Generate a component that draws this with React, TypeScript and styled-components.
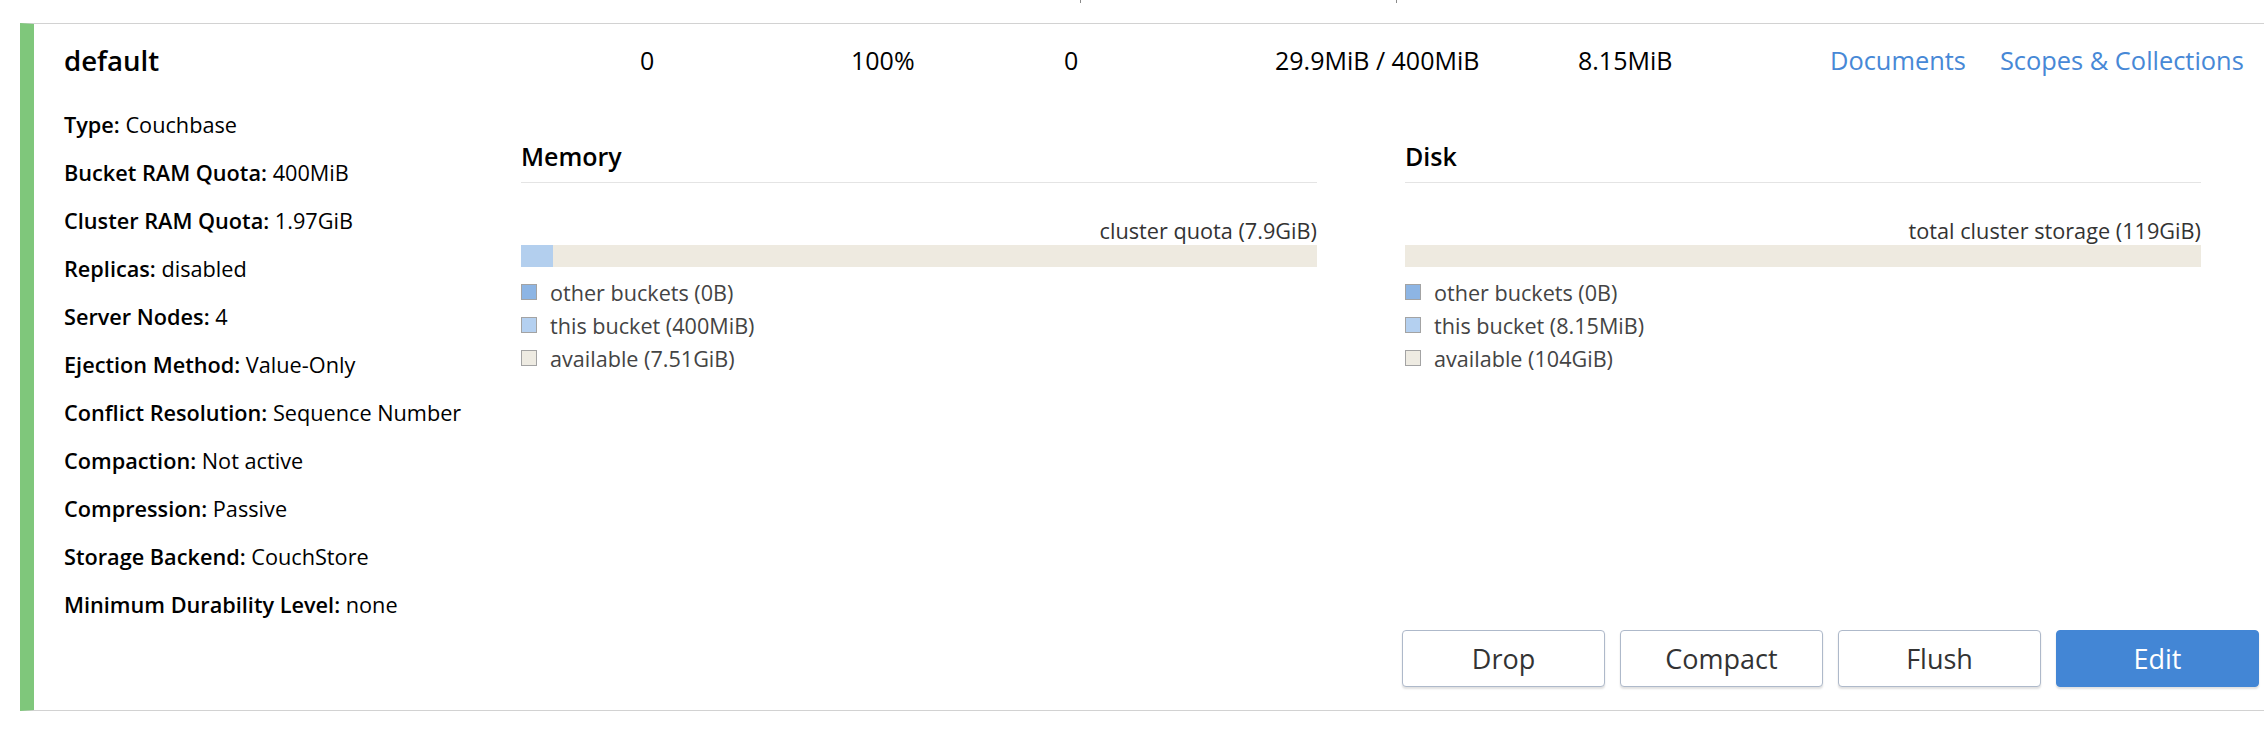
import styled, { createGlobalStyle } from "styled-components";

const GlobalStyle = createGlobalStyle`
    html, body {
        margin: 0;
        padding: 0;
        background: #fff;
    }
    body {
        font-family: "Open Sans", "Noto Sans", "Liberation Sans", sans-serif;
        color: #000;
    }
`;

const Page = styled.div`
    width: 2264px;
    height: 729px;
    overflow: hidden;
`;
const PrevRowTail = styled.div`
    height: 23px;
    display: flex;
    align-items: flex-start;
    padding-left: 1080px;
    gap: 315px;
`;
const Tick = styled.span`
    width: 1px;
    height: 3px;
    background: #8a8a8a;
`;
const Card = styled.div`
    margin-left: 20px;
    border-top: 1px solid #d2d2d2;
    border-bottom: 1px solid #d2d2d2;
    border-left: 14px solid #7fc77b;
    padding: 15.5px 5px 23px 30px;
`;
const Header = styled.div`
    display: grid;
    grid-template-columns: 576px 211px 213px 211px 303px 252px auto;
    align-items: center;
    height: 40px;
    font-size: 25px;
    line-height: 40px;
`;
const BucketName = styled.div`
    font-size: 27.6px;
    font-weight: 600;
`;
const Links = styled.div`
    display: flex;
    gap: 34px;
    font-size: 25.4px;
`;
const Link = styled.a`
    color: #4788d6;
    text-decoration: none;
    cursor: pointer;
`;
const Body = styled.div`
    margin-top: 21.1px;
    display: grid;
    grid-template-columns: 457px 1fr;
    min-height: 586px;
`;
const Details = styled.div`
    display: flex;
    flex-direction: column;
    font-size: 21.7px;
    line-height: 48px;
`;
const Label = styled.b`
    font-weight: 600;
`;
const RightSide = styled.div`
    display: flex;
    flex-direction: column;
`;
const Charts = styled.div`
    display: grid;
    grid-template-columns: 796px 796px;
    gap: 88px;
    padding-top: 38.5px;
`;
const Title = styled.div`
    font-size: 25px;
    font-weight: 600;
    line-height: 34px;
    padding-bottom: 8.7px;
    border-bottom: 1px solid #e4e4e4;
`;
const Total = styled.div`
    margin-top: 36.6px;
    text-align: right;
    font-size: 21.7px;
    line-height: 24px;
    color: #333;
`;
const Bar = styled.div`
    margin-top: 2px;
    height: 22px;
    background: #eeeae0;
    display: flex;
`;
const BarFill = styled.div`
    height: 100%;
    background: #b3cfee;
`;
const Legend = styled.div`
    margin-top: 8.5px;
    display: flex;
    flex-direction: column;
`;
const LegendRow = styled.div`
    display: flex;
    align-items: center;
    gap: 13px;
    font-size: 21.6px;
    line-height: 33px;
    color: #444;
`;
const Swatch = styled.span<{ $color: string }>`
    width: 14px;
    height: 14px;
    background: ${(p) => p.$color};
    border: 1px solid #a3a3a3;
`;
const Buttons = styled.div`
    margin-top: auto;
    display: flex;
    justify-content: flex-end;
    gap: 15px;
`;
const Button = styled.button<{ $primary?: boolean }>`
    width: 203px;
    height: 57px;
    font-family: inherit;
    font-size: 27px;
    border-radius: 4px;
    cursor: pointer;
    color: ${(p) => (p.$primary ? "#fff" : "#333")};
    background: ${(p) => (p.$primary ? "#4386d5" : "#fff")};
    border: 1px solid ${(p) => (p.$primary ? "#4386d5" : "#aeb9ca")};
    box-shadow: 0 2px 2px rgba(0, 0, 0, 0.12);
`;

const details: [string, string][] = [
    ["Type", "Couchbase"],
    ["Bucket RAM Quota", "400MiB"],
    ["Cluster RAM Quota", "1.97GiB"],
    ["Replicas", "disabled"],
    ["Server Nodes", "4"],
    ["Ejection Method", "Value-Only"],
    ["Conflict Resolution", "Sequence Number"],
    ["Compaction", "Not active"],
    ["Compression", "Passive"],
    ["Storage Backend", "CouchStore"],
    ["Minimum Durability Level", "none"],
];

interface IUsage {
    title: string;
    total: string;
    used: number;
    legend: [string, string][];
}
const usage: IUsage[] = [
    {
        title: "Memory",
        total: "cluster quota (7.9GiB)",
        used: 0.04,
        legend: [
            ["#8db5e4", "other buckets (0B)"],
            ["#b4d0f0", "this bucket (400MiB)"],
            ["#eeebe2", "available (7.51GiB)"],
        ],
    },
    {
        title: "Disk",
        total: "total cluster storage (119GiB)",
        used: 0,
        legend: [
            ["#8db5e4", "other buckets (0B)"],
            ["#b4d0f0", "this bucket (8.15MiB)"],
            ["#eeebe2", "available (104GiB)"],
        ],
    },
];

export default function App() {
    return (
        <Page>
            <GlobalStyle />
            <PrevRowTail>
                <Tick />
                <Tick />
            </PrevRowTail>
            <Card>
                <Header>
                    <BucketName>default</BucketName>
                    <div>0</div>
                    <div>100%</div>
                    <div>0</div>
                    <div>29.9MiB / 400MiB</div>
                    <div>8.15MiB</div>
                    <Links>
                        <Link>Documents</Link>
                        <Link>Scopes &amp; Collections</Link>
                    </Links>
                </Header>
                <Body>
                    <Details>
                        {details.map(([k, v]) => (
                            <div key={k}>
                                <Label>{k}:</Label> {v}
                            </div>
                        ))}
                    </Details>
                    <RightSide>
                        <Charts>
                            {usage.map((u) => (
                                <div key={u.title}>
                                    <Title>{u.title}</Title>
                                    <Total>{u.total}</Total>
                                    <Bar>
                                        <BarFill style={{ width: `${u.used * 100}%` }} />
                                    </Bar>
                                    <Legend>
                                        {u.legend.map(([c, t]) => (
                                            <LegendRow key={t}>
                                                <Swatch $color={c} />
                                                {t}
                                            </LegendRow>
                                        ))}
                                    </Legend>
                                </div>
                            ))}
                        </Charts>
                        <Buttons>
                            <Button>Drop</Button>
                            <Button>Compact</Button>
                            <Button>Flush</Button>
                            <Button $primary>Edit</Button>
                        </Buttons>
                    </RightSide>
                </Body>
            </Card>
        </Page>
    );
}
